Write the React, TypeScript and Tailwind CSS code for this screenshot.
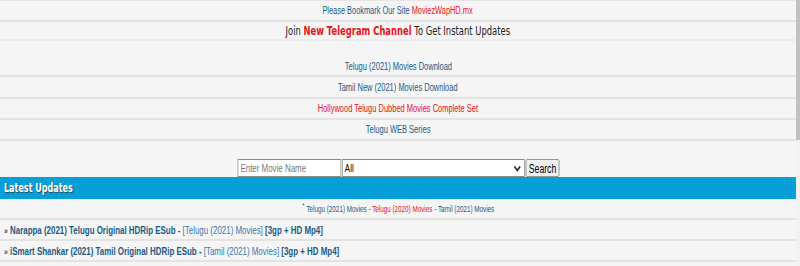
const sans = { fontFamily: '"Liberation Sans", Arial, sans-serif' };
const verdana = { fontFamily: '"DejaVu Sans", Verdana, sans-serif' };

function Row({ children, className = "" }: { children: React.ReactNode; className?: string }) {
  return (
    <div className={`flex shrink-0 items-center justify-center border-b-2 border-[#e3e3e3] ${className}`}>
      {children}
    </div>
  );
}

function Update({ title, cat }: { title: string; cat: string }) {
  return (
    <div className="flex h-[21px] shrink-0 items-center border-b-2 border-[#e3e3e3] px-1 pt-[3px]">
      <span className="inline-block origin-left scale-x-[0.755] whitespace-nowrap text-[10.5px] font-bold text-[#1b5a86]">
        <span className="mr-[3px] text-[9px]">»</span>
        {title} - <span className="font-normal text-[#3a77ad]">[{cat}]</span> [3gp + HD Mp4]
      </span>
    </div>
  );
}

export default function App() {
  return (
    <div className="flex h-[266px] w-[800px] overflow-hidden bg-[#f5f5f5]" style={sans}>
      <div className="flex w-[796px] flex-col border-t border-[#e6e6e6]">
        <Row className="h-[21px]">
          <span className="inline-block scale-x-[0.74] whitespace-nowrap text-[10px] text-[#1b5a86]">
            Please Bookmark Our Site <span className="text-[#e8121b]">MoviezWapHD.mx</span>
          </span>
        </Row>
        <Row className="h-[19px] border-b border-[#ececec] pt-[3px]">
          <span style={verdana} className="inline-block scale-x-[0.73] whitespace-nowrap text-[11.5px] text-[#222]">
            Join <b className="text-[#e8121b]">New Telegram Channel</b> To Get Instant Updates
          </span>
        </Row>
        <Row className="h-[36px] items-end pb-[1px]">
          <span className="inline-block scale-x-[0.75] whitespace-nowrap text-[10px] text-[#1b5a86]">Telugu (2021) Movies Download</span>
        </Row>
        <Row className="h-[22px]">
          <span className="inline-block scale-x-[0.75] whitespace-nowrap text-[10px] text-[#1b5a86]">Tamil New (2021) Movies Download</span>
        </Row>
        <Row className="h-[21px]">
          <span className="inline-block scale-x-[0.75] whitespace-nowrap text-[10px] text-[#e8121b]">Hollywood Telugu Dubbed Movies Complete Set</span>
        </Row>
        <Row className="h-[21px]">
          <span className="inline-block scale-x-[0.75] whitespace-nowrap text-[10px] text-[#1b5a86]">Telugu WEB Series</span>
        </Row>
        <div className="flex h-[36px] shrink-0 items-end justify-center">
          <div className="flex scale-x-[0.72] items-end">
            <input
              placeholder="Enter Movie Name"
              className="h-[18px] w-[144px] border border-[#8a8a8a] bg-white px-[3px] text-[11px] text-[#333] placeholder:text-[#777]"
            />
            <div className="ml-[1px] flex h-[18px] w-[254px] items-center justify-between border border-[#8a8a8a] bg-white px-[3px] text-[11px] text-black">
              <span>All</span>
              <svg width="11" height="7" viewBox="0 0 11 7" className="mr-[1px]">
                <path d="M1.5 1.5l4 4 4-4" fill="none" stroke="#222" strokeWidth="1.8" />
              </svg>
            </div>
            <button className="ml-[1px] h-[18px] w-[47px] rounded-[2px] border border-[#8a8a8a] bg-[#f0f0f0] text-[12px] text-black">
              Search
            </button>
          </div>
        </div>
        <div className="flex h-[22px] shrink-0 items-center bg-[#069fd8] px-1">
          <span
            style={verdana}
            className="inline-block origin-left scale-x-[0.67] whitespace-nowrap text-[12px] font-bold text-white [text-shadow:1px_1px_1px_#2a4a5a]"
          >
            Latest Updates
          </span>
        </div>
        <Row className="h-[21px] pt-[3px]">
          <span className="inline-block scale-x-[0.7] whitespace-nowrap text-[9px] text-[#1b5a86]">
            <sup className="mr-[3px] text-[8px]">*</sup>
            Telugu (2021) Movies - <span className="text-[#e8121b]">Telugu (2020) Movies</span> - Tamil (2021) Movies
          </span>
        </Row>
        <Update title="Narappa (2021) Telugu Original HDRip ESub" cat="Telugu (2021) Movies" />
        <Update title="iSmart Shankar (2021) Tamil Original HDRip ESub" cat="Tamil (2021) Movies" />
        <div className="h-[21px] shrink-0 border-b-2 border-[#e3e3e3]" />
      </div>
      <div className="flex w-[4px] flex-col bg-[#f1f1f1]">
        <div className="h-[140px] bg-[#c1c1c1]" />
      </div>
    </div>
  );
}
